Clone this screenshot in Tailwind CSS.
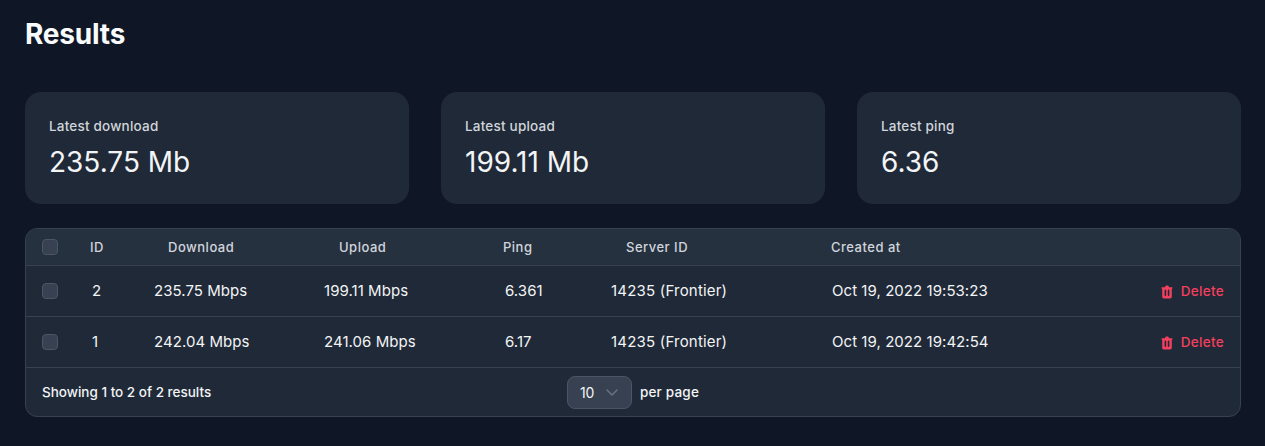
<!DOCTYPE html>
<html lang="en">
<head>
    <meta charset="UTF-8">
    <title>Results</title>
    <script src="https://cdn.jsdelivr.net/npm/@tailwindcss/browser@4"></script>
</head>
<body class="bg-[#0f1727] text-white font-['Inter',sans-serif] h-[446px] overflow-hidden">
    <div class="pl-[25px] pr-[24px]">
        <!-- Header -->
        <h1 class="h-[92px] pt-[16px] text-[28px] leading-[36px] font-bold tracking-[-0.2px] text-[#f9fafb]">Results</h1>

        <!-- Stat cards -->
        <div class="grid grid-cols-3 gap-[32px]">
            <div class="h-[112px] rounded-2xl bg-[#1f2937] pl-[24px] pt-[24px]">
                <div class="text-[13.5px] leading-[20px] font-medium text-[#d1d5db] tracking-[0.2px]">Latest download</div>
                <div class="text-[28px] leading-[36px] mt-[8px] text-[#f3f4f6]">235.75 Mb</div>
            </div>
            <div class="h-[112px] rounded-2xl bg-[#1f2937] pl-[24px] pt-[24px]">
                <div class="text-[13.5px] leading-[20px] font-medium text-[#d1d5db] tracking-[0.2px]">Latest upload</div>
                <div class="text-[28px] leading-[36px] mt-[8px] text-[#f3f4f6]">199.11 Mb</div>
            </div>
            <div class="h-[112px] rounded-2xl bg-[#1f2937] pl-[24px] pt-[24px]">
                <div class="text-[13.5px] leading-[20px] font-medium text-[#d1d5db] tracking-[0.2px]">Latest ping</div>
                <div class="text-[28px] leading-[36px] mt-[8px] text-[#f3f4f6]">6.36</div>
            </div>
        </div>

        <!-- Table -->
        <div class="mt-[24px] h-[189px] rounded-xl border border-[#374151] bg-[#1f2937] overflow-hidden">
            <table class="w-full table-fixed border-collapse text-[15px] tracking-[0.05px] text-[#f3f4f6]">
                <colgroup>
                    <col class="w-[64px]"><col class="w-[64px]"><col class="w-[170px]"><col class="w-[179px]"><col class="w-[108px]"><col class="w-[220px]"><col class="w-[270px]"><col>
                </colgroup>
                <thead>
                    <tr class="h-[36px] bg-[#263140] border-b border-[#374151] text-left text-[13px] text-[#d1d5db] tracking-[0.5px] [&>th]:pt-[2px]">
                        <th class="pl-[16px] pb-[2px] font-medium"><div class="w-[16px] h-[16px] rounded-[4px] border border-[#4b5563] bg-[#374151]"></div></th>
                        <th class="font-medium">ID</th>
                        <th class="pl-[14px] font-medium">Download</th>
                        <th class="pl-[15px] font-medium">Upload</th>
                        <th class="font-medium">Ping</th>
                        <th class="pl-[15px] font-medium">Server ID</th>
                        <th class="font-medium">Created at</th>
                        <th></th>
                    </tr>
                </thead>
                <tbody>
                    <tr class="h-[51px] border-b border-[#374151] [&>td]:pt-[2px]">
                        <td class="pl-[16px] pb-[2px]"><div class="w-[16px] h-[16px] rounded-[4px] border border-[#4b5563] bg-[#374151]"></div></td>
                        <td class="pl-[2px]">2</td>
                        <td>235.75 Mbps</td>
                        <td>199.11 Mbps</td>
                        <td class="pl-[2px]">6.361</td>
                        <td class="tracking-[0.2px]">14235 (Frontier)</td>
                        <td class="pl-[1px]">Oct 19, 2022 19:53:23</td>
                        <td class="pr-[16px]">
                            <a href="#" class="flex items-center justify-end gap-[6px] text-[13.5px] font-medium tracking-[0.3px] text-[#f43f5e]">
                                <svg class="w-[16px] h-[16px]" viewBox="0 0 20 20" fill="currentColor"><path fill-rule="evenodd" d="M9 2a1 1 0 0 0-.894.553L7.382 4H4a1 1 0 0 0 0 2v10a2 2 0 0 0 2 2h8a2 2 0 0 0 2-2V6a1 1 0 1 0 0-2h-3.382l-.724-1.447A1 1 0 0 0 11 2H9ZM7 8a1 1 0 0 1 2 0v6a1 1 0 1 1-2 0V8Zm5-1a1 1 0 0 0-1 1v6a1 1 0 1 0 2 0V8a1 1 0 0 0-1-1Z" clip-rule="evenodd"/></svg>
                                Delete
                            </a>
                        </td>
                    </tr>
                    <tr class="h-[51px] border-b border-[#374151] [&>td]:pt-[2px]">
                        <td class="pl-[16px] pb-[2px]"><div class="w-[16px] h-[16px] rounded-[4px] border border-[#4b5563] bg-[#374151]"></div></td>
                        <td class="pl-[2px]">1</td>
                        <td>242.04 Mbps</td>
                        <td>241.06 Mbps</td>
                        <td class="pl-[2px]">6.17</td>
                        <td class="tracking-[0.2px]">14235 (Frontier)</td>
                        <td class="pl-[1px]">Oct 19, 2022 19:42:54</td>
                        <td class="pr-[16px]">
                            <a href="#" class="flex items-center justify-end gap-[6px] text-[13.5px] font-medium tracking-[0.3px] text-[#f43f5e]">
                                <svg class="w-[16px] h-[16px]" viewBox="0 0 20 20" fill="currentColor"><path fill-rule="evenodd" d="M9 2a1 1 0 0 0-.894.553L7.382 4H4a1 1 0 0 0 0 2v10a2 2 0 0 0 2 2h8a2 2 0 0 0 2-2V6a1 1 0 1 0 0-2h-3.382l-.724-1.447A1 1 0 0 0 11 2H9ZM7 8a1 1 0 0 1 2 0v6a1 1 0 1 1-2 0V8Zm5-1a1 1 0 0 0-1 1v6a1 1 0 1 0 2 0V8a1 1 0 0 0-1-1Z" clip-rule="evenodd"/></svg>
                                Delete
                            </a>
                        </td>
                    </tr>
                </tbody>
            </table>
            <!-- Pagination -->
            <div class="h-[49px] grid grid-cols-3 items-center text-[13.5px] font-medium text-[#f3f4f6]">
                <div class="pl-[16px]">Showing 1 to 2 of 2 results</div>
                <div class="flex items-center gap-[8px] justify-center">
                    <div class="w-[65px] h-[33px] rounded-lg border border-[#4b5563] bg-[#374151] flex items-center pl-[12px] text-[14px] font-normal">
                        10
                        <svg class="w-[20px] h-[20px] ml-[8px] text-[#6b7280]" viewBox="0 0 20 20" fill="none" stroke="currentColor" stroke-width="1.5" stroke-linecap="round" stroke-linejoin="round"><path d="M5 8l5 5 5-5"/></svg>
                    </div>
                    <span class="tracking-[0.2px]">per page</span>
                </div>
                <div></div>
            </div>
        </div>
    </div>
</body>
</html>
